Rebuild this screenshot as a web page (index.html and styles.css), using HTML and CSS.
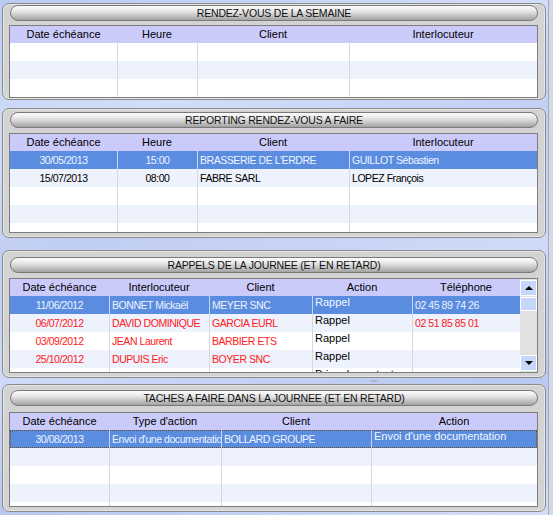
FILE: index.html
```html
<!DOCTYPE html>
<html lang="fr">
<head>
<meta charset="utf-8">
<title>Agenda</title>
<link rel="stylesheet" href="styles.css">
</head>
<body>
<div class="screen">
  <div class="main">
    <section class="panel p1">
      <div class="title">RENDEZ-VOUS DE LA SEMAINE</div>
      <div class="grid g1">
        <div class="row head cols-a"><div>Date échéance</div><div>Heure</div><div>Client</div><div>Interlocuteur</div></div>
        <div class="row cols-a"><div></div><div></div><div></div><div></div></div>
        <div class="row alt cols-a"><div></div><div></div><div></div><div></div></div>
        <div class="row cols-a"><div></div><div></div><div></div><div></div></div>
      </div>
    </section>

    <section class="panel p2">
      <div class="title">REPORTING RENDEZ-VOUS A FAIRE</div>
      <div class="grid g2">
        <div class="row head cols-a"><div>Date échéance</div><div>Heure</div><div>Client</div><div>Interlocuteur</div></div>
        <div class="row sel cols-a"><div class="ctr">30/05/2013</div><div class="ctr">15:00</div><div>BRASSERIE DE L'ERDRE</div><div>GUILLOT Sébastien</div></div>
        <div class="row alt cols-a"><div class="ctr">15/07/2013</div><div class="ctr">08:00</div><div>FABRE SARL</div><div>LOPEZ François</div></div>
        <div class="row cols-a"><div></div><div></div><div></div><div></div></div>
        <div class="row alt cols-a"><div></div><div></div><div></div><div></div></div>
        <div class="row cols-a"><div></div><div></div><div></div><div></div></div>
      </div>
    </section>

    <section class="panel p3">
      <div class="title">RAPPELS DE LA JOURNEE (ET EN RETARD)</div>
      <div class="grid g3">
        <div class="rows">
          <div class="row head cols-c"><div>Date échéance</div><div>Interlocuteur</div><div>Client</div><div>Action</div><div>Téléphone</div></div>
          <div class="row sel cols-c"><div class="ctr">11/06/2012</div><div>BONNET Mickaël</div><div>MEYER SNC</div><div class="act">Rappel</div><div>02 45 89 74 26</div></div>
          <div class="row alt red cols-c"><div class="ctr">06/07/2012</div><div>DAVID DOMINIQUE</div><div>GARCIA EURL</div><div class="act">Rappel</div><div>02 51 85 85 01</div></div>
          <div class="row red cols-c"><div class="ctr">03/09/2012</div><div>JEAN Laurent</div><div>BARBIER ETS</div><div class="act">Rappel</div><div></div></div>
          <div class="row alt red cols-c"><div class="ctr">25/10/2012</div><div>DUPUIS Eric</div><div>BOYER SNC</div><div class="act">Rappel</div><div></div></div>
          <div class="row cols-c"><div></div><div></div><div></div><div class="act">Prise de contact</div><div></div></div>
        </div>
        <div class="sbar">
          <div class="sbtn"><span class="tri-up"></span></div>
          <div class="thumb"></div>
          <div class="track"></div>
          <div class="sbtn"><span class="tri-down"></span></div>
        </div>
      </div>
    </section>

    <div class="gap"><div class="grip"></div></div>

    <section class="panel p4">
      <div class="title">TACHES A FAIRE DANS LA JOURNEE (ET EN RETARD)</div>
      <div class="grid g4">
        <div class="row head cols-d"><div>Date échéance</div><div>Type d'action</div><div>Client</div><div>Action</div></div>
        <div class="row sel focus cols-d"><div class="ctr">30/08/2013</div><div>Envoi d'une documentation</div><div>BOLLARD GROUPE</div><div class="act">Envoi d'une documentation</div></div>
        <div class="row alt cols-d"><div></div><div></div><div></div><div></div></div>
        <div class="row cols-d"><div></div><div></div><div></div><div></div></div>
        <div class="row alt cols-d"><div></div><div></div><div></div><div></div></div>
        <div class="row cols-d"><div></div><div></div><div></div><div></div></div>
      </div>
    </section>
  </div>
  <div class="edge"></div>
</div>
</body>
</html>
```

FILE: styles.css
```css
html, body {
  margin: 0;
  padding: 0;
}
body {
  width: 553px;
  height: 515px;
  overflow: hidden;
  font-family: "Liberation Sans", Arial, sans-serif;
  background: linear-gradient(165deg, #bccbf2 0%, #d2ddf9 22%, #c0cef3 40%, #cfdaf8 58%, #b9c8f0 78%, #d4def9 100%);
}
.screen {
  display: flex;
  height: 515px;
}
.main {
  width: 548px;
  padding-left: 2px;
  box-sizing: border-box;
}
.edge {
  flex: 1;
  border-left: 1px solid #a2a9bb;
  background: #d5d9e5;
}

/* panels */
.panel {
  width: 544px;
  box-sizing: border-box;
  border: 1px solid #8a8a8a;
  border-radius: 7px;
  background: #d3d3d3;
  box-shadow: inset 0 0 0 1px #e6e6e6;
  padding: 0 7px 0 6px;
  overflow: hidden;
}
.p1 { margin-top: 3px; height: 97px; padding-top: 1px; }
.p2 { margin-top: 8px; height: 130px; padding-top: 3px; }
.p3 { margin-top: 12px; height: 128px; padding-top: 6px; }
.p4 { height: 128px; padding-top: 5px; }

.gap {
  height: 6px;
}
.grip {
  margin-left: 369px;
  padding-top: 2px;
  width: 6px;
  height: 2px;
  box-sizing: content-box;
  background: #b0b4c0;
  background-clip: content-box;
}

.title {
  margin-left: 1px;
  width: 528px;
  height: 16px;
  box-sizing: border-box;
  border: 1px solid #7a7a7a;
  border-radius: 8px;
  background: linear-gradient(#fbfbfb 0%, #ececec 30%, #c9c9c9 65%, #a2a2a2 100%);
  text-align: center;
  font-family: "Liberation Sans", Arial, sans-serif;
  font-size: 10.5px;
  letter-spacing: -0.2px;
  line-height: 15px;
  color: #111;
  white-space: nowrap;
}

/* grids */
.grid {
  width: 529px;
  box-sizing: border-box;
  border: 1px solid #7d7d7d;
  background: #ffffff;
  overflow: hidden;
}
.g1 { margin-top: 4px; height: 73px; }
.g2 { margin-top: 5px; height: 100px; }
.g3 { margin-top: 5px; height: 95px; display: flex; }
.g4 { margin-top: 6px; height: 95px; }

.rows {
  width: 510px;
  flex: 0 0 510px;
}

.row {
  display: grid;
  height: 18px;
  background: #ffffff;
  color: #000;
  font-family: "Liberation Sans", Arial, sans-serif;
  font-size: 10.5px;
  letter-spacing: -0.45px;
  line-height: 18px;
}
.row > div {
  box-sizing: border-box;
  overflow: hidden;
  white-space: nowrap;
  padding-left: 2px;
}
.row > div + div {
  border-left: 1px solid #d8d8d8;
}
.row.alt { background: #eef2fc; }

.row.head {
  height: 17px;
  background: #cbcbfb;
  font-size: 11px;
  letter-spacing: 0;
  line-height: 17px;
}
.row.head > div {
  text-align: center;
  padding-left: 0;
}
.row.head > div + div { border-left: none; }

.cols-a { grid-template-columns: 107px 80px 152px 188px; }
.cols-c { grid-template-columns: 99px 100px 103px 100px 108px; }
.cols-d { grid-template-columns: 99px 112px 150px 166px; }

.row > div.ctr {
  text-align: center;
  padding-left: 0;
}
.row > div.act {
  font-size: 11px;
  letter-spacing: 0;
  line-height: 13px;
  color: #000;
  padding-left: 2px;
}

.row.sel {
  background: #5a8ddf;
  color: #eef3ff;
}
.row.sel > div + div {
  border-left-color: #c7d6f3;
}
.row.sel > div.act { color: #f2f6ff; }
.row.red { color: #ff2020; }
.row.red > div.act { color: #000; }

.row.focus {
  outline: 1px dotted #6b4a1c;
  outline-offset: -1px;
}

/* scrollbar */
.sbar {
  flex: 1;
  display: flex;
  flex-direction: column;
  background: #e1e1e1;
  padding: 1px 0;
}
.sbtn, .thumb {
  height: 16px;
  box-sizing: border-box;
  border: 1px solid #ffffff;
  background: #c5d7fa;
  display: flex;
  align-items: center;
  justify-content: center;
}
.thumb { margin-top: 1px; height: 14px; }
.track { flex: 1; }
.tri-up {
  width: 0;
  height: 0;
  border-left: 4px solid transparent;
  border-right: 4px solid transparent;
  border-bottom: 4px solid #000;
}
.tri-down {
  width: 0;
  height: 0;
  border-left: 4px solid transparent;
  border-right: 4px solid transparent;
  border-top: 4px solid #000;
}
```
